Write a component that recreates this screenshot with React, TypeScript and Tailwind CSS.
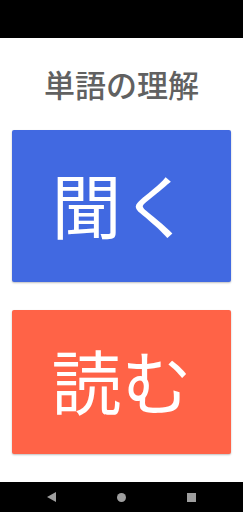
export default function App() {
  const font = { fontFamily: '"Noto Sans CJK JP", "Noto Sans", sans-serif' };
  return (
    <div className="flex h-[512px] w-[243px] flex-col bg-white" style={font}>
      <div className="h-[38px] w-full bg-black" />
      <div className="flex flex-1 flex-col px-3">
        <h1 className="mt-[26px] h-[40px] text-center text-[31px] leading-[40px] font-medium text-[#616161]">
          単語の理解
        </h1>
        <button className="mt-[26px] flex h-[152px] w-full items-center justify-center rounded-[2px] bg-[#4169e1] pb-[4px] text-[70px] leading-none text-white shadow-[0_1px_2px_rgba(0,0,0,0.25)]">
          聞く
        </button>
        <button className="mt-[28px] flex h-[144px] w-full items-center justify-center rounded-[2px] bg-[#ff6347] pb-[4px] text-[70px] leading-none text-white shadow-[0_1px_2px_rgba(0,0,0,0.25)]">
          読む
        </button>
      </div>
      <div className="flex h-[30px] w-full items-center bg-black">
        <div className="flex w-full items-center justify-between px-[47px]">
          <svg width="9" height="10" viewBox="0 0 9 10">
            <polygon points="9,0 9,10 0,5" fill="#9e9e9e" />
          </svg>
          <span className="block h-[9px] w-[9px] rounded-full bg-[#9e9e9e]" />
          <span className="block h-[9px] w-[9px] bg-[#9e9e9e]" />
        </div>
      </div>
    </div>
  );
}
